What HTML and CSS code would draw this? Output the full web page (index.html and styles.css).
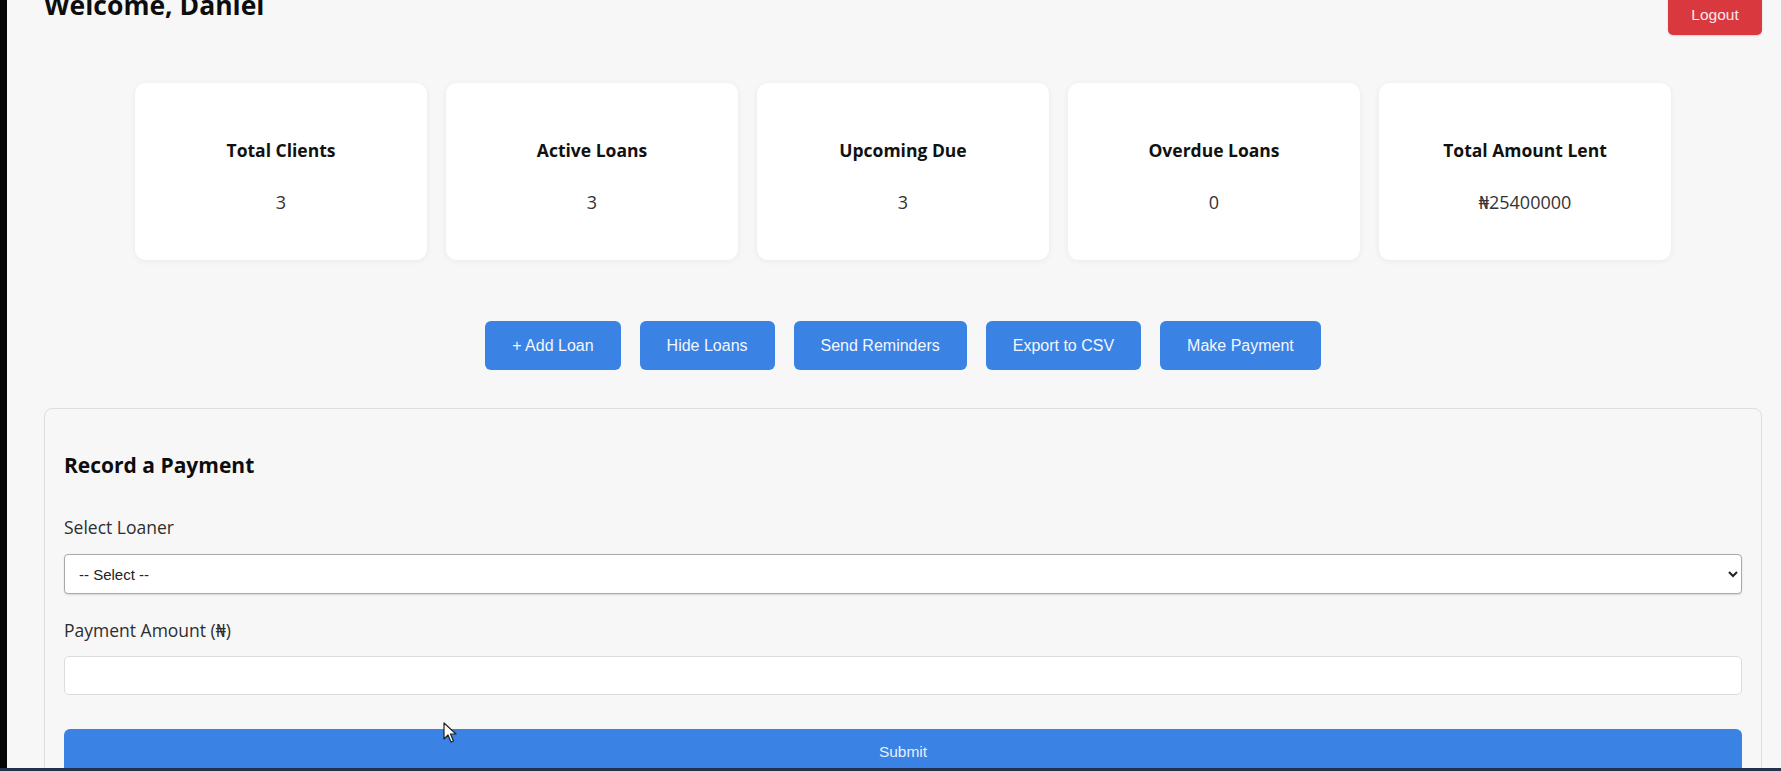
FILE: index.html
```html
<!DOCTYPE html>
<html lang="en">
<head>
<meta charset="utf-8">
<title>Dashboard</title>
<link rel="stylesheet" href="styles.css">
</head>
<body>
<div class="screen">
  <header class="topbar">
    <h1 class="welcome">Welcome, Daniel</h1>
    <button class="logout" type="button">Logout</button>
  </header>

  <section class="stats">
    <div class="card"><h3 class="card-title">Total Clients</h3><p class="card-value">3</p></div>
    <div class="card"><h3 class="card-title">Active Loans</h3><p class="card-value">3</p></div>
    <div class="card"><h3 class="card-title">Upcoming Due</h3><p class="card-value">3</p></div>
    <div class="card"><h3 class="card-title">Overdue Loans</h3><p class="card-value">0</p></div>
    <div class="card"><h3 class="card-title">Total Amount Lent</h3><p class="card-value">₦25400000</p></div>
  </section>

  <div class="actions">
    <button class="btn" type="button">+ Add Loan</button>
    <button class="btn" type="button">Hide Loans</button>
    <button class="btn" type="button">Send Reminders</button>
    <button class="btn" type="button">Export to CSV</button>
    <button class="btn" type="button">Make Payment</button>
  </div>

  <section class="panel">
    <h2 class="panel-title">Record a Payment</h2>
    <label class="field-label" for="loaner">Select Loaner</label>
    <select class="field-select" id="loaner">
      <option>-- Select --</option>
    </select>
    <label class="field-label" for="amount">Payment Amount (₦)</label>
    <input class="field-input" id="amount" type="text">
    <button class="submit" type="button">Submit</button>
  </section>
</div>
<svg class="cursor" width="14" height="22" viewBox="0 0 14 22"><path d="M1 1 L1 17 L5 13 L8 20 L10.5 19 L7.5 12 L13 12 Z" fill="#fff" stroke="#222" stroke-width="1.2" stroke-linejoin="round"/></svg>
<div class="taskbar"></div>
</body>
</html>
```

FILE: styles.css
```css
html, body {
  margin: 0;
  height: 100%;
}

body {
  background: #050505;
  font-family: "Open Sans", "Noto Sans", "DejaVu Sans", sans-serif;
  color: #111;
  overflow: hidden;
}

.screen {
  margin-left: 7px;
  height: 771px;
  box-sizing: border-box;
  padding: 0 19px 0 37px;
  background: #f7f7f7;
  overflow: hidden;
}

.topbar {
  display: flex;
  justify-content: space-between;
  align-items: flex-start;
  height: 35px;
}

.welcome {
  margin: -13px 0 0 0;
  font-size: 26.5px;
  line-height: 36px;
  font-weight: 700;
  color: #0d0d0d;
}

.logout {
  margin-top: -7px;
  width: 94px;
  height: 42px;
  border: 0;
  border-radius: 5px;
  background: #d9383f;
  color: #fbe9ea;
  font-family: "Liberation Sans", Arial, sans-serif;
  font-size: 15.5px;
  padding: 2px 0 0 0;
  box-shadow: 0 1px 2px rgba(0,0,0,0.15);
}

.stats {
  display: flex;
  justify-content: center;
  gap: 19px;
  margin-top: 48px;
}

.card {
  width: 292px;
  height: 177px;
  box-sizing: border-box;
  padding-top: 55px;
  background: #fff;
  border-radius: 11px;
  box-shadow: 0 1px 6px rgba(0,0,0,0.06);
  text-align: center;
}

.card-title {
  margin: 0;
  font-size: 17.5px;
  line-height: 24px;
  font-weight: 700;
  color: #111;
}

.card-value {
  margin: 28px 0 0 0;
  font-size: 18px;
  line-height: 24px;
  color: #333;
}

.actions {
  display: flex;
  justify-content: center;
  gap: 19px;
  margin-top: 61px;
}

.btn {
  height: 49px;
  padding: 0 27px;
  border: 0;
  border-radius: 6px;
  background: #3a82e4;
  color: #f2f7ff;
  font-family: "Liberation Sans", Arial, sans-serif;
  font-size: 16px;
}

.panel {
  margin-top: 38px;
  border: 1px solid #dedede;
  border-radius: 8px;
  padding: 0 19px;
  background: #f7f7f7;
  height: 500px;
}

.panel-title {
  margin: 42px 0 0 0;
  font-size: 21px;
  line-height: 28px;
  font-weight: 700;
  color: #0d0d0d;
}

.field-label {
  display: block;
  font-size: 17.5px;
  line-height: 24px;
  color: #2e2e2e;
}

.panel-title + .field-label {
  margin-top: 36px;
}

.field-select {
  display: block;
  width: 100%;
  height: 40px;
  margin-top: 15px;
  box-sizing: border-box;
  padding: 0 10px;
  border: 1px solid #a9a9a9;
  border-radius: 4px;
  background: #fff;
  color: #222;
  font-family: "Liberation Sans", Arial, sans-serif;
  font-size: 15px;
  box-shadow: 0 1px 2px rgba(0,0,0,0.12);
}

.field-select + .field-label {
  margin-top: 24px;
}

.field-input {
  display: block;
  width: 100%;
  height: 39px;
  margin-top: 14px;
  box-sizing: border-box;
  border: 1px solid #dcdcdc;
  border-radius: 5px;
  background: #fff;
  padding: 0 10px;
  font-size: 15px;
}

.submit {
  display: block;
  width: 100%;
  height: 46px;
  margin-top: 34px;
  border: 0;
  border-radius: 6px;
  background: #3a82e4;
  color: #e6f0ff;
  font-family: "Liberation Sans", Arial, sans-serif;
  font-size: 15.5px;
}

.cursor {
  position: fixed;
  left: 443px;
  top: 722px;
}

.taskbar {
  position: fixed;
  left: 0;
  right: 0;
  bottom: 0;
  height: 3px;
  background: #22324a;
}
```
